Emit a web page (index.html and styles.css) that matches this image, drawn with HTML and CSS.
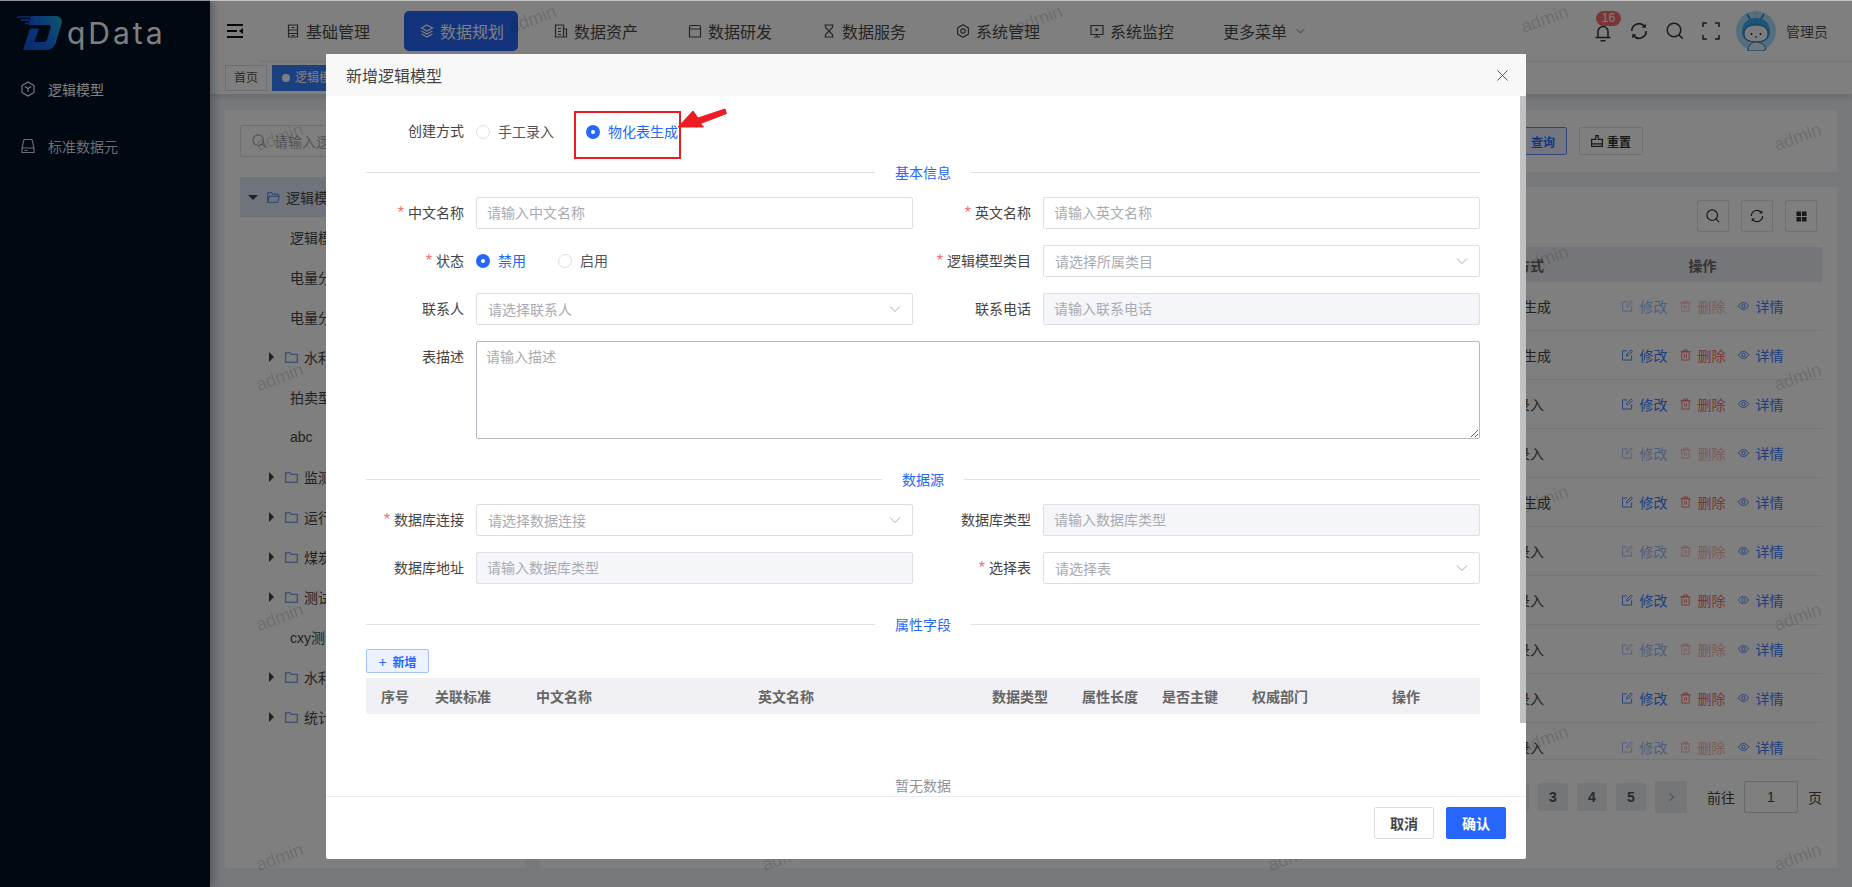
FILE: index.html
```html
<!DOCTYPE html>
<html lang="zh-CN">
  <head>
    <meta charset="UTF-8" />
    <title>qData</title>
    <link rel="stylesheet" href="styles.css">
  </head>
  <body>
    <!-- icon sprite -->
    <svg class="sprite" xmlns="http://www.w3.org/2000/svg">
      <defs>
        <linearGradient id="logo-fill" x1="0" y1="0.6" x2="1" y2="0.2">
          <stop offset="0" stop-color="#1557e0" />
          <stop offset="0.5" stop-color="#1a6cf0" />
          <stop offset="1" stop-color="#20a8d8" />
        </linearGradient>
      </defs>
      <symbol id="i-menu" viewBox="0 0 16 14"><path d="M0 1h16M0 7h10M0 13h16" fill="none" stroke="currentColor" stroke-width="2"/><path d="M16 4v6l-4-3z" fill="currentColor"/></symbol>
      <symbol id="i-base" viewBox="0 0 14 14"><path d="M2.500 1h9v12h-9zM2.500 6h9M2.500 9.500h9M5.500 3.500h3M5.500 11.500h3" fill="none" stroke="currentColor" stroke-width="1.2"/></symbol>
      <symbol id="i-layers" viewBox="0 0 14 14"><path d="M7 1 12.500 4 7 7 1.500 4zM1.500 7 7 10l5.500-3M1.500 10 7 13l5.500-3" fill="none" stroke="currentColor" stroke-width="1.2"/></symbol>
      <symbol id="i-asset" viewBox="0 0 14 14"><path d="M1.500 1h8v12h-8zM9.500 5h3v8h-3M4 4.500h3M4 7.500h3M4 10.500h3" fill="none" stroke="currentColor" stroke-width="1.2"/></symbol>
      <symbol id="i-dev" viewBox="0 0 14 14"><path d="M3 1.500h8a1.500 1.500 0 0 1 1.500 1.500v10h-11V3A1.500 1.500 0 0 1 3 1.500zM1.500 5h11" fill="none" stroke="currentColor" stroke-width="1.2"/></symbol>
      <symbol id="i-hourglass" viewBox="0 0 14 14"><path d="M2.500 1h9M2.500 13h9M3.500 1v2.500L10.500 10.500V13M10.500 1v2.500L3.500 10.500V13" fill="none" stroke="currentColor" stroke-width="1.2"/></symbol>
      <symbol id="i-system" viewBox="0 0 14 14"><path d="M7 .8 12.400 3.900v6.200L7 13.200 1.600 10.100V3.900z" fill="none" stroke="currentColor" stroke-width="1.2"/><circle cx="7" cy="7" r="2.200" fill="none" stroke="currentColor" stroke-width="1.200"/></symbol>
      <symbol id="i-monitor" viewBox="0 0 14 14"><path d="M1 1.500h12v9H1zM4 13h6M7 10.500V13" fill="none" stroke="currentColor" stroke-width="1.2"/><path d="M5.500 4v3.500L9 5.750z" fill="currentColor"/></symbol>
      <symbol id="i-chevron" viewBox="0 0 12 8"><path d="M1 1.500 6 6.500l5-5" fill="none" stroke="currentColor" stroke-width="1"/></symbol>
      <symbol id="i-bell" viewBox="0 0 18 18"><path d="M4 13V7.500a5 5 0 0 1 10 0V13M1.500 13.500h15M6.500 16.800h5" fill="none" stroke="currentColor" stroke-width="1.500"/></symbol>
      <symbol id="i-refresh" viewBox="0 0 18 18"><path d="M1.800 9A7.200 7.200 0 0 1 14.300 4.100M16.200 9A7.200 7.200 0 0 1 3.700 13.900" fill="none" stroke="currentColor" stroke-width="1.600"/><path d="M15.800 1.600v4.200h-4.200zM2.200 16.400v-4.200h4.200z" fill="currentColor"/></symbol>
      <symbol id="i-search" viewBox="0 0 18 18"><circle cx="8" cy="8" r="6.800" fill="none" stroke="currentColor" stroke-width="1.500"/><path d="m12.800 12.800 4 4" fill="none" stroke="currentColor" stroke-width="1.500"/></symbol>
      <symbol id="i-expand" viewBox="0 0 18 18"><path d="M1 5V1h4M13 1h4v4M17 13v4h-4M5 17H1v-4" fill="none" stroke="currentColor" stroke-width="1.500"/></symbol>
      <symbol id="i-cube" viewBox="0 0 14 16"><path d="M7 1 13 4.500v7L7 15 1 11.500v-7z" fill="none" stroke="currentColor" stroke-width="1.100"/><path d="M3.800 5.500 7 7.500l3.200-2M7 7.500V11" fill="none" stroke="currentColor" stroke-width="1.100"/></symbol>
      <symbol id="i-drive" viewBox="0 0 14 16"><path d="M3 1.500h8L13 10v4.500H1V10zM1 10h12M3.500 12.500h3" fill="none" stroke="currentColor" stroke-width="1.100"/></symbol>
      <symbol id="i-folder" viewBox="0 0 14 12"><path d="M.7.700h4.600l1.200 1.700h6.800v8.900H.7z" fill="none" stroke="currentColor" stroke-width="1.100"/></symbol>
      <symbol id="i-folder-open" viewBox="0 0 14 12"><path d="M.7 11.300V.7h4.200l1.200 1.700h5.600v2.300M.7 11.300h10.800l1.900-6.600H2.600z" fill="none" stroke="currentColor" stroke-width="1.100"/></symbol>
      <symbol id="i-edit" viewBox="0 0 12 12"><path d="M10.500 6.500v5H.5v-10h5M5 7l.3-2L10 .5l1.500 1.500L6.800 6.700z" fill="none" stroke="currentColor" stroke-width="1"/></symbol>
      <symbol id="i-trash" viewBox="0 0 12 12"><path d="M.5 2.500h11M4 2.500v-2h4v2M2 2.500h8v9H2zM5 5v4M7 5v4" fill="none" stroke="currentColor" stroke-width="1"/></symbol>
      <symbol id="i-eye" viewBox="0 0 12 12"><path d="M.5 6C2 3.300 4 2.200 6 2.200S10 3.300 11.500 6C10 8.700 8 9.800 6 9.800S2 8.700.5 6z" fill="none" stroke="currentColor" stroke-width="1"/><circle cx="6" cy="6" r="1.900" fill="none" stroke="currentColor" stroke-width="1"/></symbol>
      <symbol id="i-brush" viewBox="0 0 12 12"><path d="M4.800.600h2.400v3.700h4.200v7.100H.6V4.300h4.200zM.6 8.800h10.800" fill="none" stroke="currentColor" stroke-width="1.200"/></symbol>
      <symbol id="i-grid" viewBox="0 0 12 12"><path d="M.5.500h5v5h-5zM6.500.500h5v5h-5zM.5 6.500h5v5h-5zM6.500 6.500h5v5h-5z" fill="currentColor"/></symbol>
    </svg>

    <div class="layout">
      <aside class="sidebar">
        <div class="logo">
          <svg class="logo-mark" viewBox="0 0 45 34">
            <path fill-rule="evenodd" d="M14 0h24c5.500 0 7.800 3.500 6.500 8L39 26c-1.500 5-5 8-10 8H6l7-21.500h9L17.500 26H27c1.500 0 2.500-1 3-2.500l3.500-12c.4-1.500-.2-2.500-1.500-2.500H11.500z" fill="url(#logo-fill)"/>
            <path d="M0 1h15M4 4.200h13M8 7.400h8" stroke="#1557e0" stroke-width="1.700"/>
          </svg>
          <span class="logo-text">qData</span>
        </div>
        <nav class="side-menu">
          <a class="side-item active"><svg class="side-icon"><use href="#i-cube"/></svg>逻辑模型</a>
          <a class="side-item"><svg class="side-icon"><use href="#i-drive"/></svg>标准数据元</a>
        </nav>
      </aside>

      <div class="main">
        <header class="topbar">
          <svg class="hamburger"><use href="#i-menu"/></svg>
          <nav class="top-nav">
            <a class="nav-item"><svg class="nav-icon"><use href="#i-base"/></svg>基础管理</a>
            <a class="nav-item active"><svg class="nav-icon"><use href="#i-layers"/></svg>数据规划</a>
            <a class="nav-item"><svg class="nav-icon"><use href="#i-asset"/></svg>数据资产</a>
            <a class="nav-item"><svg class="nav-icon"><use href="#i-dev"/></svg>数据研发</a>
            <a class="nav-item"><svg class="nav-icon"><use href="#i-hourglass"/></svg>数据服务</a>
            <a class="nav-item"><svg class="nav-icon"><use href="#i-system"/></svg>系统管理</a>
            <a class="nav-item"><svg class="nav-icon"><use href="#i-monitor"/></svg>系统监控</a>
            <a class="nav-item nav-more">更多菜单<svg class="more-icon"><use href="#i-chevron"/></svg></a>
          </nav>
          <div class="top-right">
            <span class="bell">
              <svg class="top-icon"><use href="#i-bell"/></svg>
              <span class="badge">16</span>
            </span>
            <svg class="top-icon"><use href="#i-refresh"/></svg>
            <svg class="top-icon"><use href="#i-search"/></svg>
            <svg class="top-icon"><use href="#i-expand"/></svg>
            <svg class="avatar" viewBox="0 0 40 40">
              <circle cx="20" cy="20" r="20" fill="#a8dcff"/>
              <path d="M14 8 11 3M25 8l3-5" stroke="#2a7fc8" stroke-width="1.500"/>
              <path d="M6 21C6 12 12 7 20 7s14 5 14 14c0 6-4 9-8 10H14C10 30 6 27 6 21z" fill="#38a8f0"/>
              <path d="M8 23c0-6 5-9 12-9s12 3 12 9c0 5-5 8-12 8S8 28 8 23z" fill="#f6fafd" stroke="#1f6fb8"/>
              <circle cx="15.500" cy="23" r="1" fill="#223"/>
              <circle cx="24.500" cy="23" r="1" fill="#223"/>
              <path d="M19 26h2" stroke="#223"/>
              <path d="M12 40c0-5 3-9 8-9s9 3 10 7l-3 2z" fill="#d8eefc" stroke="#1f6fb8"/>
            </svg>
            <span class="user-name">管理员</span>
          </div>
        </header>

        <div class="tags">
          <span class="tag">首页</span>
          <span class="tag tag-active"><i class="tag-dot"></i>逻辑模型</span>
        </div>

        <div class="content">
          <section class="card tree-card">
            <div class="tree-search">
              <svg class="tree-search-icon"><use href="#i-search"/></svg>
              <span>请输入逻辑模型类目</span>
            </div>
            <ul class="tree">
              <li class="tree-row tree-root"><i class="caret caret-down"></i><svg class="folder"><use href="#i-folder-open"/></svg>逻辑模型</li>
              <li class="tree-row tree-leaf">逻辑模型</li>
              <li class="tree-row tree-leaf">电量分析</li>
              <li class="tree-row tree-leaf">电量分类</li>
              <li class="tree-row tree-child"><i class="caret"></i><svg class="folder"><use href="#i-folder"/></svg>水利</li>
              <li class="tree-row tree-leaf">拍卖型</li>
              <li class="tree-row tree-leaf">abc</li>
              <li class="tree-row tree-child"><i class="caret"></i><svg class="folder"><use href="#i-folder"/></svg>监测</li>
              <li class="tree-row tree-child"><i class="caret"></i><svg class="folder"><use href="#i-folder"/></svg>运行</li>
              <li class="tree-row tree-child"><i class="caret"></i><svg class="folder"><use href="#i-folder"/></svg>煤炭</li>
              <li class="tree-row tree-child"><i class="caret"></i><svg class="folder"><use href="#i-folder"/></svg>测试</li>
              <li class="tree-row tree-leaf">cxy测试</li>
              <li class="tree-row tree-child"><i class="caret"></i><svg class="folder"><use href="#i-folder"/></svg>水利</li>
              <li class="tree-row tree-child"><i class="caret"></i><svg class="folder"><use href="#i-folder"/></svg>统计</li>
            </ul>
          </section>

          <div class="right-col">
            <section class="card search-card">
              <button class="mini-btn mini-primary"><svg class="mini-icon"><use href="#i-search"/></svg>查询</button>
              <button class="mini-btn"><svg class="mini-icon"><use href="#i-brush"/></svg>重置</button>
            </section>

            <section class="card table-card">
              <div class="table-tools">
                <button class="tool-btn"><svg class="tool-icon"><use href="#i-search"/></svg></button>
                <button class="tool-btn"><svg class="tool-icon"><use href="#i-refresh"/></svg></button>
                <button class="tool-btn"><svg class="tool-grid"><use href="#i-grid"/></svg></button>
              </div>
              <div class="list-table">
                <div class="list-head"><span class="col-method">创建方式</span><span class="col-actions">操作</span></div>
                <div class="list-row"><span class="col-method">物化表生成</span><span class="col-actions off"><a class="act act-blue"><svg class="act-icon"><use href="#i-edit"/></svg>修改</a><a class="act act-red"><svg class="act-icon"><use href="#i-trash"/></svg>删除</a><a class="act act-view"><svg class="act-icon"><use href="#i-eye"/></svg>详情</a></span></div>
                <div class="list-row"><span class="col-method">物化表生成</span><span class="col-actions"><a class="act act-blue"><svg class="act-icon"><use href="#i-edit"/></svg>修改</a><a class="act act-red"><svg class="act-icon"><use href="#i-trash"/></svg>删除</a><a class="act act-view"><svg class="act-icon"><use href="#i-eye"/></svg>详情</a></span></div>
                <div class="list-row"><span class="col-method">手工录入</span><span class="col-actions"><a class="act act-blue"><svg class="act-icon"><use href="#i-edit"/></svg>修改</a><a class="act act-red"><svg class="act-icon"><use href="#i-trash"/></svg>删除</a><a class="act act-view"><svg class="act-icon"><use href="#i-eye"/></svg>详情</a></span></div>
                <div class="list-row"><span class="col-method">手工录入</span><span class="col-actions off"><a class="act act-blue"><svg class="act-icon"><use href="#i-edit"/></svg>修改</a><a class="act act-red"><svg class="act-icon"><use href="#i-trash"/></svg>删除</a><a class="act act-view"><svg class="act-icon"><use href="#i-eye"/></svg>详情</a></span></div>
                <div class="list-row"><span class="col-method">物化表生成</span><span class="col-actions"><a class="act act-blue"><svg class="act-icon"><use href="#i-edit"/></svg>修改</a><a class="act act-red"><svg class="act-icon"><use href="#i-trash"/></svg>删除</a><a class="act act-view"><svg class="act-icon"><use href="#i-eye"/></svg>详情</a></span></div>
                <div class="list-row"><span class="col-method">手工录入</span><span class="col-actions off"><a class="act act-blue"><svg class="act-icon"><use href="#i-edit"/></svg>修改</a><a class="act act-red"><svg class="act-icon"><use href="#i-trash"/></svg>删除</a><a class="act act-view"><svg class="act-icon"><use href="#i-eye"/></svg>详情</a></span></div>
                <div class="list-row"><span class="col-method">手工录入</span><span class="col-actions"><a class="act act-blue"><svg class="act-icon"><use href="#i-edit"/></svg>修改</a><a class="act act-red"><svg class="act-icon"><use href="#i-trash"/></svg>删除</a><a class="act act-view"><svg class="act-icon"><use href="#i-eye"/></svg>详情</a></span></div>
                <div class="list-row"><span class="col-method">手工录入</span><span class="col-actions off"><a class="act act-blue"><svg class="act-icon"><use href="#i-edit"/></svg>修改</a><a class="act act-red"><svg class="act-icon"><use href="#i-trash"/></svg>删除</a><a class="act act-view"><svg class="act-icon"><use href="#i-eye"/></svg>详情</a></span></div>
                <div class="list-row"><span class="col-method">手工录入</span><span class="col-actions"><a class="act act-blue"><svg class="act-icon"><use href="#i-edit"/></svg>修改</a><a class="act act-red"><svg class="act-icon"><use href="#i-trash"/></svg>删除</a><a class="act act-view"><svg class="act-icon"><use href="#i-eye"/></svg>详情</a></span></div>
                <div class="list-row"><span class="col-method">手工录入</span><span class="col-actions off"><a class="act act-blue"><svg class="act-icon"><use href="#i-edit"/></svg>修改</a><a class="act act-red"><svg class="act-icon"><use href="#i-trash"/></svg>删除</a><a class="act act-view"><svg class="act-icon"><use href="#i-eye"/></svg>详情</a></span></div>
              </div>
              <div class="pager">
                <span class="page-num">2</span>
                <span class="page-num">3</span>
                <span class="page-num">4</span>
                <span class="page-num">5</span>
                <span class="page-next"><svg class="page-arrow"><use href="#i-chevron"/></svg></span>
                <span class="page-label">前往</span>
                <span class="page-input">1</span>
                <span class="page-unit">页</span>
              </div>
            </section>
          </div>
        </div>

        <!-- watermark layer -->
        <svg class="watermark" xmlns="http://www.w3.org/2000/svg">
          <defs>
            <pattern id="wm" patternUnits="userSpaceOnUse" x="0" y="-40" width="506" height="240">
              <text class="wm-text" x="323" y="65" text-anchor="middle" transform="rotate(-20 323 60)">admin</text>
              <text class="wm-text" x="70" y="183" text-anchor="middle" transform="rotate(-20 70 178)">admin</text>
            </pattern>
          </defs>
          <rect width="100%" height="100%" fill="url(#wm)" />
        </svg>
      </div>
    </div>

    <div class="overlay">
      <div class="modal">
        <div class="modal-header">
          <span class="modal-title">新增逻辑模型</span>
          <svg class="modal-close" viewBox="0 0 11 11"><path d="M.5.500l10 10M10.500.500l-10 10" stroke="currentColor" fill="none"/></svg>
        </div>

        <div class="modal-body">
          <div class="form-item radio-row">
            <label class="form-label">创建方式</label>
            <div class="radio-group">
              <span class="radio"><i class="radio-dot"></i>手工录入</span>
              <span class="radio checked"><i class="radio-dot"></i>物化表生成</span>
            </div>
          </div>

          <div class="divider divider-first"><span>基本信息</span></div>

          <div class="form-grid">
            <div class="form-item">
              <label class="form-label"><em>*</em>中文名称</label>
              <input class="field" placeholder="请输入中文名称" />
            </div>
            <div class="form-item">
              <label class="form-label"><em>*</em>英文名称</label>
              <input class="field" placeholder="请输入英文名称" />
            </div>
            <div class="form-item">
              <label class="form-label"><em>*</em>状态</label>
              <div class="radio-group status-group">
                <span class="radio checked"><i class="radio-dot"></i>禁用</span>
                <span class="radio"><i class="radio-dot"></i>启用</span>
              </div>
            </div>
            <div class="form-item">
              <label class="form-label"><em>*</em>逻辑模型类目</label>
              <div class="field select">请选择所属类目<svg class="select-arrow"><use href="#i-chevron"/></svg></div>
            </div>
            <div class="form-item">
              <label class="form-label">联系人</label>
              <div class="field select">请选择联系人<svg class="select-arrow"><use href="#i-chevron"/></svg></div>
            </div>
            <div class="form-item">
              <label class="form-label">联系电话</label>
              <input class="field" placeholder="请输入联系电话" disabled />
            </div>
            <div class="form-item form-item-wide">
              <label class="form-label">表描述</label>
              <textarea class="field area" placeholder="请输入描述"></textarea>
            </div>
          </div>

          <div class="divider"><span>数据源</span></div>

          <div class="form-grid">
            <div class="form-item">
              <label class="form-label"><em>*</em>数据库连接</label>
              <div class="field select">请选择数据连接<svg class="select-arrow"><use href="#i-chevron"/></svg></div>
            </div>
            <div class="form-item">
              <label class="form-label">数据库类型</label>
              <input class="field" placeholder="请输入数据库类型" disabled />
            </div>
            <div class="form-item">
              <label class="form-label">数据库地址</label>
              <input class="field" placeholder="请输入数据库类型" disabled />
            </div>
            <div class="form-item">
              <label class="form-label"><em>*</em>选择表</label>
              <div class="field select">请选择表<svg class="select-arrow"><use href="#i-chevron"/></svg></div>
            </div>
          </div>

          <div class="divider"><span>属性字段</span></div>

          <button class="add-btn"><span class="add-plus">+</span>新增</button>
          <div class="attr-head">
            <span>序号</span>
            <span>关联标准</span>
            <span class="attr-left">中文名称</span>
            <span class="attr-left">英文名称</span>
            <span>数据类型</span>
            <span>属性长度</span>
            <span>是否主键</span>
            <span>权威部门</span>
            <span>操作</span>
          </div>
          <div class="attr-empty">暂无数据</div>
        </div>

        <div class="modal-footer">
          <button class="btn">取消</button>
          <button class="btn btn-primary">确认</button>
        </div>

        <!-- scrollbar and the red annotation on the screenshot -->
        <div class="scroll-thumb"></div>
        <div class="note-box"></div>
        <svg class="note-arrow" viewBox="0 0 54 30">
          <path d="M0 23 15 7l5 7 27-9 1.500 4.500-26 10 3 3.500z" fill="#ed1c24" stroke="#ed1c24" stroke-width="1" stroke-linejoin="round"/>
        </svg>
      </div>
    </div>
  </body>
</html>
```

FILE: styles.css
```css
* {
  box-sizing: border-box;
}

html,
body {
  margin: 0;
  height: 887px;
  overflow: hidden;
}

body {
  position: relative;
  font-family: 'Liberation Sans', 'Noto Sans CJK SC', sans-serif;
  font-size: 14px;
  color: #444;
}

.sprite {
  position: absolute;
  width: 0;
  height: 0;
}

.layout {
  display: flex;
  height: 887px;
}

/* sidebar */
.sidebar {
  flex: 0 0 210px;
  background: #001024;
  box-shadow: 2px 0 10px rgba(0, 0, 0, 0.35);
  z-index: 1;
}

.logo {
  display: flex;
  align-items: center;
  height: 60px;
  padding: 6px 0 0 17px;
}

.logo-mark {
  flex: none;
  width: 45px;
  height: 34px;
}

.logo-text {
  margin-left: 5px;
  font-family: Inter, sans-serif;
  font-size: 30px;
  letter-spacing: 3px;
  color: #fff;
}

.side-menu {
  display: flex;
  flex-direction: column;
}

.side-item {
  display: flex;
  align-items: center;
  height: 57px;
  padding-left: 21px;
  color: #d6dae0;
}

.side-item.active {
  color: #fff;
}

.side-icon {
  width: 14px;
  height: 16px;
  margin-right: 13px;
}

/* main area */
.main {
  position: relative;
  flex: 1;
  min-width: 0;
  display: flex;
  flex-direction: column;
  background: #f0f2f8;
}

.topbar {
  display: flex;
  align-items: center;
  height: 61px;
  padding-left: 17px;
  padding-right: 24px;
  background: #fff;
}

.hamburger {
  flex: none;
  width: 16px;
  height: 14px;
  margin-right: 27px;
  color: #111;
}

.top-nav {
  display: flex;
  gap: 20px;
}

.nav-item {
  display: flex;
  align-items: center;
  height: 40px;
  padding: 0 14px 0 16px;
  border-radius: 5px;
  font-size: 16px;
  color: #4a4a4a;
}

.nav-item.active {
  background: #2666fb;
  color: #fff;
}

.nav-more {
  padding-left: 15px;
}

.nav-icon {
  width: 14px;
  height: 14px;
  margin-right: 6px;
}

.more-icon {
  width: 9px;
  height: 6px;
  margin-left: 9px;
}

.top-right {
  display: flex;
  align-items: center;
  gap: 18px;
  margin-left: auto;
}

.top-icon {
  display: block;
  width: 18px;
  height: 18px;
  color: #333;
}

.bell {
  position: relative;
  margin-top: 4px;
}

.badge {
  position: absolute;
  left: 2px;
  top: -13px;
  width: 25px;
  height: 15px;
  border-radius: 8px;
  background: #f56c6c;
  color: #fff;
  font-size: 12px;
  line-height: 15px;
  text-align: center;
}

.avatar {
  width: 40px;
  height: 40px;
  margin-left: -2px;
}

.user-name {
  margin-left: -8px;
  color: #555;
}

.tags {
  position: relative;
  display: flex;
  align-items: center;
  gap: 5px;
  height: 33px;
  padding-left: 15px;
  background: #fff;
  box-shadow: 0 3px 6px rgba(0, 0, 0, 0.12);
}

/* the line under the top nav starts right of the menu toggle */
.tags::before {
  content: '';
  position: absolute;
  left: 50px;
  right: 0;
  top: 0;
  height: 1px;
  background: #e4e6ea;
}

.tag {
  height: 26px;
  padding: 0 8px;
  border: 1px solid #d8dce5;
  font-size: 12px;
  line-height: 24px;
  color: #555;
}

.tag-active {
  width: 120px;
  padding-left: 9px;
  background: #3680ff;
  border-color: #3680ff;
  color: #fff;
}

.tag-dot {
  display: inline-block;
  width: 8px;
  height: 8px;
  margin-right: 5px;
  border-radius: 50%;
  background: #fff;
}

.content {
  flex: 1;
  min-height: 0;
  display: flex;
  gap: 15px;
  padding: 16px 15px 19px;
}

.card {
  background: #fff;
}

.tree-card {
  flex: 0 0 300px;
  padding: 15px;
  overflow: hidden;
}

.tree-search {
  display: flex;
  align-items: center;
  height: 32px;
  padding-left: 11px;
  border: 1px solid #dcdfe6;
  border-radius: 2px;
  color: #a8abb2;
}

.tree-search-icon {
  width: 14px;
  height: 14px;
  margin-right: 8px;
}

.tree {
  list-style: none;
  margin: 20px 0 0;
  padding: 0;
}

.tree-row {
  display: flex;
  align-items: center;
  height: 40px;
  color: #444;
  white-space: nowrap;
}

.tree-root {
  padding-left: 8px;
  background: #dfe6f7;
}

.tree-leaf {
  padding-left: 50px;
}

.tree-child {
  padding-left: 29px;
}

.caret {
  width: 0;
  height: 0;
  margin-right: 11px;
  border-top: 5px solid transparent;
  border-bottom: 5px solid transparent;
  border-left: 5px solid #444;
}

.caret-down {
  margin-right: 9px;
  border-left: 5px solid transparent;
  border-right: 5px solid transparent;
  border-top: 5px solid #444;
  border-bottom: 0;
}

.folder {
  width: 13px;
  height: 11px;
  margin-right: 6px;
  color: #4a86e8;
}

.right-col {
  flex: 1;
  min-width: 0;
  display: flex;
  flex-direction: column;
  gap: 15px;
}

.search-card {
  display: flex;
  justify-content: flex-end;
  align-items: center;
  gap: 12px;
  height: 62px;
  padding-right: 194px;
}

.mini-btn {
  display: flex;
  align-items: center;
  height: 28px;
  padding: 0 11px;
  border: 1px solid #dcdfe6;
  border-radius: 2px;
  background: #fff;
  font: inherit;
  font-size: 12px;
  font-weight: 700;
  color: #333;
}

.mini-primary {
  border-color: #5d8cf5;
  background: #e8efff;
  color: #2f6bf0;
}

.mini-icon {
  width: 12px;
  height: 12px;
  margin-right: 4px;
}

.table-card {
  flex: 1;
  min-height: 0;
  padding: 13px 15px;
}

.table-tools {
  display: flex;
  justify-content: flex-end;
  gap: 12px;
  padding-right: 5px;
}

.tool-btn {
  display: flex;
  align-items: center;
  justify-content: center;
  width: 32px;
  height: 32px;
  padding: 0;
  border: 1px solid #dcdfe6;
  border-radius: 2px;
  background: #fff;
  color: #333;
}

.tool-icon {
  width: 14px;
  height: 14px;
}

.tool-grid {
  width: 11px;
  height: 11px;
}

.list-table {
  height: 513px;
  margin-top: 15px;
  border-bottom: 1px solid #e8ebf0;
  overflow: hidden;
}

.list-head,
.list-row {
  display: flex;
  justify-content: flex-end;
  align-items: center;
}

.list-head {
  height: 35px;
  background: #ebedf2;
  font-weight: 700;
  color: #666;
}

.list-row {
  height: 49px;
  border-bottom: 1px solid #e8ebf0;
}

.col-method {
  width: 132px;
  text-align: center;
}

.col-actions {
  display: flex;
  justify-content: center;
  width: 240px;
  padding-left: 1px;
  gap: 12px;
}

.act {
  display: flex;
  align-items: center;
}

.act-icon {
  width: 11px;
  height: 12px;
  margin-right: 7px;
}

.act-blue,
.act-view {
  color: #3a7cff;
}

.act-red {
  color: #f56c6c;
}

.off .act-blue,
.off .act-red {
  opacity: 0.5;
}

.pager {
  display: flex;
  justify-content: flex-end;
  align-items: center;
  gap: 9px;
  height: 32px;
  margin-top: 21px;
}

.page-num {
  width: 30px;
  height: 28px;
  border-radius: 2px;
  background: #ebedf0;
  font-weight: 700;
  line-height: 28px;
  text-align: center;
  color: #555;
}

.page-next {
  display: flex;
  align-items: center;
  justify-content: center;
  width: 32px;
  height: 32px;
  background: #ebedf0;
  color: #555;
}

.page-arrow {
  width: 9px;
  height: 8px;
  transform: rotate(-90deg);
}

.page-label {
  margin-left: 11px;
}

.page-input {
  width: 54px;
  height: 32px;
  border: 1px solid #d0d3da;
  border-radius: 2px;
  line-height: 30px;
  text-align: center;
}

.page-unit {
  margin-left: 1px;
}

.watermark {
  position: absolute;
  inset: 0;
  width: 100%;
  height: 100%;
  pointer-events: none;
}

.wm-text {
  font-family: 'Liberation Sans', sans-serif;
  font-size: 18px;
  fill: rgba(0, 0, 0, 0.14);
}

/* dialog */
.overlay {
  position: absolute;
  inset: 0;
  z-index: 10;
  display: flex;
  justify-content: center;
  background: rgba(0, 0, 0, 0.5);
  border-top: 1px solid rgba(255, 255, 255, 0.55);
}

.modal {
  position: relative;
  width: 1200px;
  height: 805px;
  margin-top: 53px;
  display: flex;
  flex-direction: column;
  border-radius: 2px;
  background: #fff;
}

.modal-header {
  flex: none;
  display: flex;
  align-items: center;
  justify-content: space-between;
  height: 42px;
  padding: 0 18px 0 20px;
  background: #f8f8f8;
}

.modal-title {
  font-size: 16px;
  color: #444;
}

.modal-close {
  width: 11px;
  height: 11px;
  color: #555;
}

.modal-body {
  flex: 1;
  min-height: 0;
  padding: 19px 46px 0 40px;
  overflow: hidden;
}

.modal-footer {
  flex: none;
  display: flex;
  justify-content: flex-end;
  gap: 12px;
  height: 63px;
  padding: 10px 20px 0 0;
  border-top: 1px solid #ebedf0;
}

.scroll-thumb {
  position: absolute;
  right: 0;
  top: 42px;
  width: 6px;
  height: 627px;
  background: #c1c1c1;
}

.form-grid {
  display: grid;
  grid-template-columns: 547px 547px;
  gap: 16px 20px;
}

.form-item {
  display: flex;
}

.form-item-wide {
  grid-column: 1 / -1;
}

.form-label {
  flex: 0 0 98px;
  margin-right: 12px;
  line-height: 32px;
  text-align: right;
  white-space: nowrap;
  color: #444;
}

.form-label em {
  margin-right: 4px;
  font-size: 16px;
  font-style: normal;
  color: #f56c6c;
}

.radio-row {
  height: 32px;
  margin-bottom: 25px;
}

.radio-group {
  display: flex;
  align-items: center;
  gap: 32px;
}

.status-group {
  padding-bottom: 2px;
}

.radio {
  display: flex;
  align-items: center;
  gap: 8px;
  color: #555;
}

.radio-dot {
  position: relative;
  top: 1px;
  width: 14px;
  height: 14px;
  border: 1px solid #dcdfe6;
  border-radius: 50%;
  background: #fff;
}

.radio.checked {
  color: #2666fb;
}

.radio.checked .radio-dot {
  border: 5px solid #2666fb;
}

.field {
  flex: 1;
  min-width: 0;
  height: 32px;
  padding: 0 11px 0 10px;
  border: 1px solid #dcdfe6;
  border-radius: 2px;
  background: #fff;
  outline: none;
  font: inherit;
  color: #444;
}

.field::placeholder {
  color: #a8abb2;
  opacity: 1;
}

.field:disabled {
  background: #f5f6fa;
}

.select {
  display: flex;
  align-items: center;
  justify-content: space-between;
  padding-left: 11px;
  color: #a8abb2;
}

.select-arrow {
  width: 12px;
  height: 8px;
}

.area {
  height: 98px;
  padding: 4px 9px;
  border-color: #b4b8c0;
  line-height: 22px;
}

.divider {
  position: relative;
  height: 1px;
  margin: 40px 0 24px;
  background: #dfe1e8;
}

.divider-first {
  margin-top: 0;
}

.divider span {
  position: absolute;
  left: 50%;
  top: 50%;
  transform: translate(-50%, -50%);
  padding: 0 20px;
  background: #fff;
  line-height: 20px;
  white-space: nowrap;
  color: #2666fb;
}

.add-btn {
  display: block;
  width: 63px;
  height: 24px;
  padding: 0;
  border: 1px solid #a6c0fd;
  border-radius: 2px;
  background: #edf2ff;
  font: inherit;
  font-size: 12px;
  font-weight: 700;
  color: #2666fb;
}

.add-plus {
  margin-right: 6px;
  font-size: 14px;
  font-weight: 400;
}

.attr-head {
  display: grid;
  grid-template-columns: 58px 78px 222px 248px 96px 84px 76px 104px 148px;
  align-items: center;
  height: 36px;
  margin-top: 5px;
  background: #f0f0f5;
  font-weight: 700;
  color: #666;
  text-align: center;
}

.attr-left {
  padding-left: 34px;
  text-align: left;
}

.attr-empty {
  padding-top: 62px;
  line-height: 20px;
  text-align: center;
  color: #909399;
}

.btn {
  width: 60px;
  height: 32px;
  padding: 0;
  border: 1px solid #dcdfe6;
  border-radius: 2px;
  background: #fff;
  font: inherit;
  font-weight: 700;
  color: #444;
}

.btn-primary {
  border-color: #2666fb;
  background: #2666fb;
  color: #fff;
}

.note-box {
  position: absolute;
  left: 248px;
  top: 57px;
  width: 107px;
  height: 48px;
  border: 2px solid #ed1c24;
}

.note-arrow {
  position: absolute;
  left: 352px;
  top: 50px;
  width: 54px;
  height: 30px;
}
```
